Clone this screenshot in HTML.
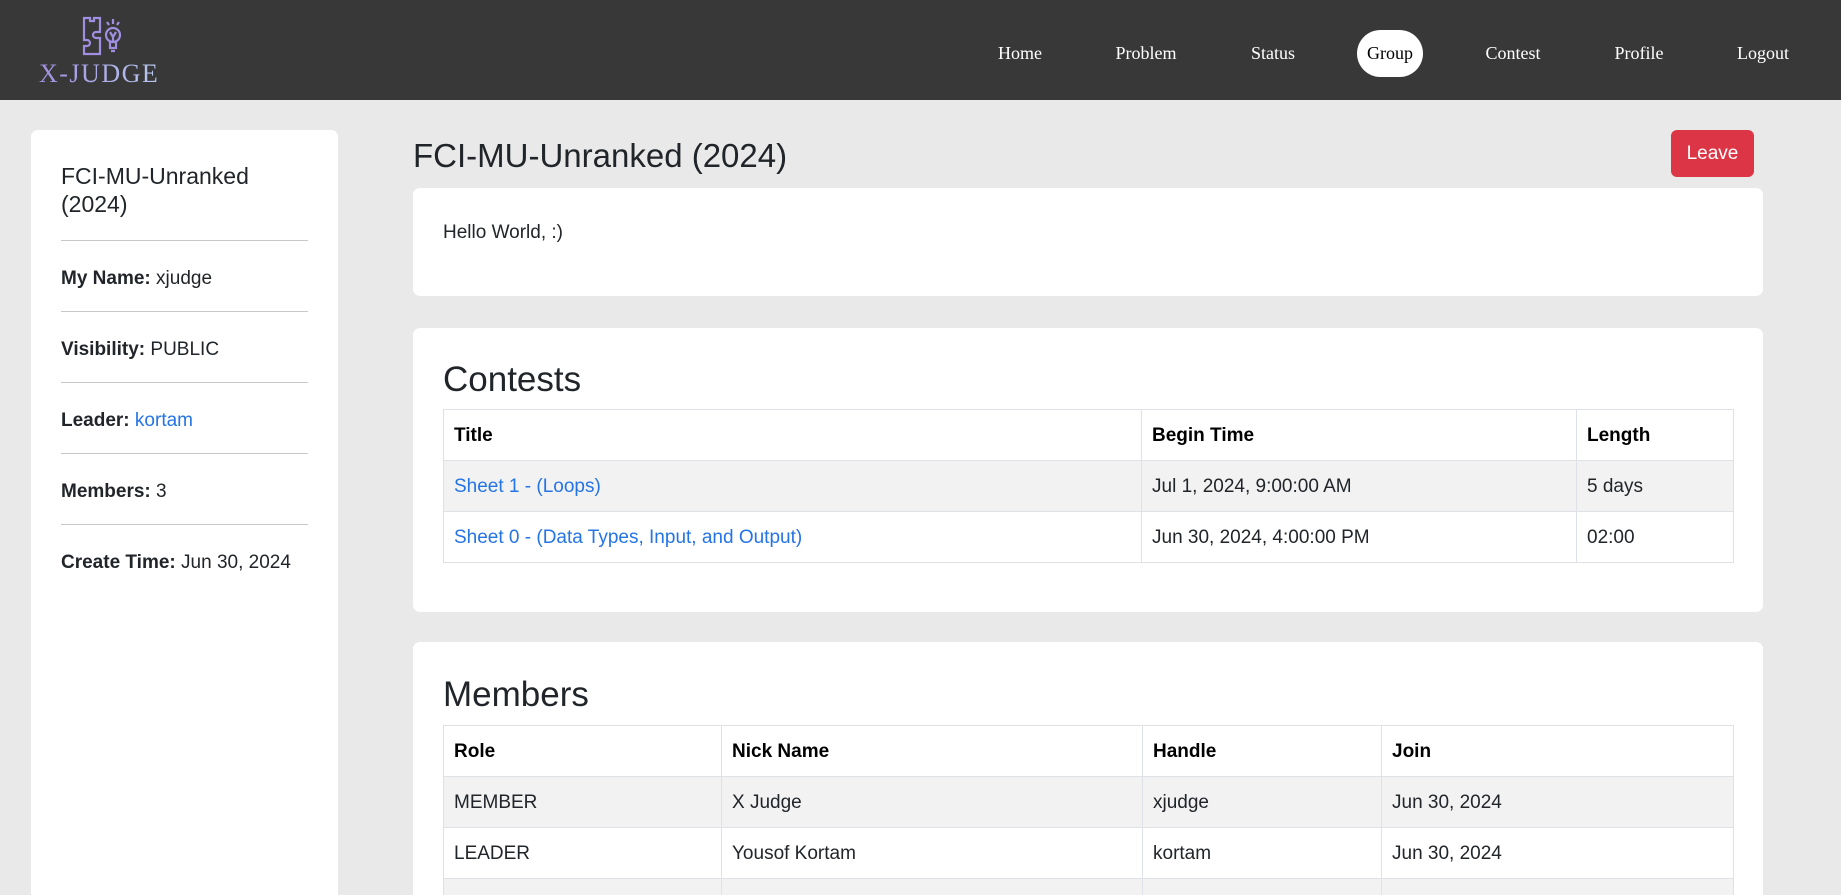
<!DOCTYPE html>
<html><head><meta charset="utf-8"><style>
*{box-sizing:border-box;margin:0;padding:0}
html,body{width:1841px;height:895px;overflow:hidden}
body{background:#e9e9e9;font-family:"Liberation Sans",Arial,sans-serif;color:#212529;position:relative}
.nav{position:absolute;left:0;top:0;width:1841px;height:100px;background:#383838}
.nav a{position:absolute;top:43px;font-family:"Liberation Serif",serif;font-size:18px;color:#fff;transform:translateX(-50%);white-space:nowrap}
.nav a.act{background:#fff;color:#000;border-radius:24px;padding:13px 10px;top:30px}
.logo{position:absolute;left:39px;top:59px;font-family:"Liberation Serif",serif;font-size:26px;letter-spacing:1.5px;background:linear-gradient(90deg,#a08ee0,#b8c8f0);-webkit-background-clip:text;color:transparent;font-weight:normal}
.card{position:absolute;background:#fff;border-radius:7px}
.side .t{position:absolute;left:30px;top:32px;font-size:23px;line-height:28px;width:220px}
.side .r{position:absolute;left:30px;width:247px;font-size:19px;border-top:1px solid #c8c8c8;padding-top:27px}
b{font-weight:bold}
a.l{color:#2474e5;text-decoration:none}
h2{position:absolute;font-weight:normal;font-size:35px}
table{position:absolute;border-collapse:collapse;font-size:19px}
td,th{border:1px solid #dee2e6;height:51px;padding:2px 10px 0;text-align:left;vertical-align:middle}
th{font-weight:bold;color:#000}
tr.s td{background:#f2f2f2}
</style></head><body>
<div class="nav">
<svg style="position:absolute;left:82px;top:16px" width="42" height="40" viewBox="0 0 42 40" fill="none" stroke="#a08ee0" stroke-width="2.2">
<path d="M2 2h6v3h4v-3h6v14h-4a3 3 0 0 0 0 6h4v16h-16v-8h3a3 3 0 0 0 0-6h-3z"/>
<circle cx="31" cy="19" r="7"/><path d="M28 26v6h6v-6M29 35h4M28 16l3 5l3-5M31 21v5M31 3v5M25 6l2 3M37 6l-2 3"/>
</svg>
<div class="logo">X-JUDGE</div>
<a style="left:1020px">Home</a>
<a style="left:1146px">Problem</a>
<a style="left:1273px">Status</a>
<a class="act" style="left:1390px">Group</a>
<a style="left:1513px">Contest</a>
<a style="left:1639px">Profile</a>
<a style="left:1763px">Logout</a>
</div>
<div class="card side" style="left:31px;top:130px;width:307px;height:765px;border-radius:7px 7px 0 0">
<div class="t">FCI-MU-Unranked (2024)</div>
<div class="r" style="top:110px"><b>My Name:</b> xjudge</div>
<div class="r" style="top:181px"><b>Visibility:</b> PUBLIC</div>
<div class="r" style="top:252px"><b>Leader:</b> <a class="l">kortam</a></div>
<div class="r" style="top:323px"><b>Members:</b> 3</div>
<div class="r" style="top:394px"><b>Create Time:</b> Jun 30, 2024</div>
</div>
<div style="position:absolute;left:413px;top:137px;font-size:33px">FCI-MU-Unranked (2024)</div>
<div style="position:absolute;left:1671px;top:130px;width:83px;height:47px;background:#dc3545;border-radius:6px;color:#fff;font-size:19px;text-align:center;line-height:47px">Leave</div>
<div class="card" style="left:413px;top:188px;width:1350px;height:108px">
<div style="position:absolute;left:30px;top:34px;font-size:19px">Hello World, :)</div>
</div>
<div class="card" style="left:413px;top:328px;width:1350px;height:284px">
<h2 style="left:30px;top:32px">Contests</h2>
<table style="left:30px;top:81px;width:1291px">
<tr><th style="width:698px">Title</th><th style="width:435px">Begin Time</th><th>Length</th></tr>
<tr class="s"><td><a class="l">Sheet 1 - (Loops)</a></td><td>Jul 1, 2024, 9:00:00 AM</td><td>5 days</td></tr>
<tr><td><a class="l">Sheet 0 - (Data Types, Input, and Output)</a></td><td>Jun 30, 2024, 4:00:00 PM</td><td>02:00</td></tr>
</table>
</div>
<div class="card" style="left:413px;top:642px;width:1350px;height:253px;border-radius:7px 7px 0 0;overflow:hidden">
<h2 style="left:30px;top:33px">Members</h2>
<table style="left:30px;top:83px;width:1291px">
<tr><th style="width:278px">Role</th><th style="width:421px">Nick Name</th><th style="width:239px">Handle</th><th>Join</th></tr>
<tr class="s"><td>MEMBER</td><td>X Judge</td><td>xjudge</td><td>Jun 30, 2024</td></tr>
<tr><td>LEADER</td><td>Yousof Kortam</td><td>kortam</td><td>Jun 30, 2024</td></tr>
<tr class="s"><td>&nbsp;</td><td></td><td></td><td></td></tr>
</table>
</div>
</body></html>
